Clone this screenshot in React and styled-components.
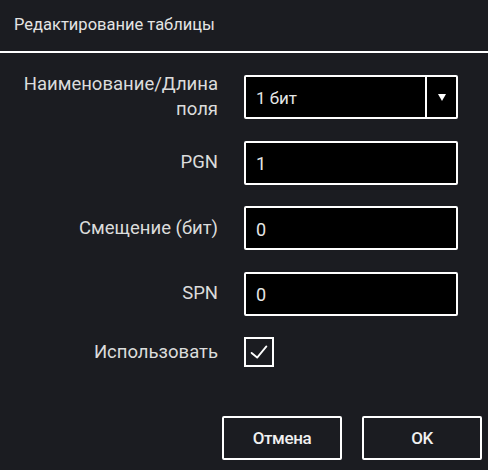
import React from 'react';
import styled, { createGlobalStyle } from 'styled-components';

const GlobalStyle = createGlobalStyle`
  html, body {
    margin: 0;
    padding: 0;
    background: #1b1c21;
  }
  body {
    font-family: Roboto, "Liberation Sans", sans-serif;
    color: #e6e6e6;
  }
`;

const Dialog = styled.div`
  width: 488px;
  height: 470px;
  background: #1b1c21;
  display: flex;
  flex-direction: column;
  box-sizing: border-box;
`;

const Header = styled.div`
  height: 53px;
  display: flex;
  align-items: center;
  padding-left: 14px;
  padding-bottom: 2px;
  box-sizing: border-box;
  border-bottom: 2px solid #ffffff;
  font-size: 16.5px;
  color: #e4e4e4;
`;

const Form = styled.div`
  display: grid;
  grid-template-columns: 1fr 214px;
  grid-template-rows: repeat(4, 44px) 30px;
  column-gap: 26px;
  row-gap: 21.5px;
  padding: 22px 30px 0 16px;
  align-items: center;
`;

const Label = styled.label`
  text-align: right;
  font-size: 18.5px;
  line-height: 25px;
  color: #dcdcdc;
`;

const Field = styled.div`
  height: 44px;
  box-sizing: border-box;
  border: 2px solid #ffffff;
  border-radius: 2px;
  background: #000000;
  display: flex;
  align-items: center;
  color: #e6e6e6;
`;

const Value = styled.span`
  flex: 1;
  padding-left: 10px;
  padding-top: 2px;
  font-size: ${(p) => (p.small ? '17px' : '18px')};
`;

const Arrow = styled.div`
  width: 29px;
  align-self: stretch;
  border-left: 2px solid #ffffff;
  display: flex;
  align-items: center;
  justify-content: center;

  &::after {
    content: '';
    border-left: 4px solid transparent;
    border-right: 4px solid transparent;
    border-top: 7px solid #ffffff;
    margin-top: 1px;
  }
`;

const Check = styled.div`
  width: 30px;
  height: 30px;
  box-sizing: border-box;
  border: 2px solid #ffffff;
  display: flex;
  align-items: center;
  justify-content: center;
`;

const Buttons = styled.div`
  display: flex;
  justify-content: flex-end;
  gap: 20px;
  padding-right: 6px;
  margin-top: 49px;
`;

const Button = styled.button`
  width: 120px;
  height: 44px;
  box-sizing: border-box;
  border: 2px solid #ffffff;
  border-radius: 2px;
  background: #1b1c21;
  color: #f0f0f0;
  font-family: Roboto, "Liberation Sans", sans-serif;
  font-size: 17px;
  font-weight: 500;
  letter-spacing: -0.4px;
  padding: 0;
  cursor: pointer;
`;

function TextField({ value }) {
  return (
    <Field>
      <Value>{value}</Value>
    </Field>
  );
}

export default function App() {
  return (
    <>
      <GlobalStyle />
      <Dialog>
        <Header>Редактирование таблицы</Header>
        <Form>
          <Label>Наименование/Длина поля</Label>
          <Field>
            <Value small>1 бит</Value>
            <Arrow />
          </Field>

          <Label>PGN</Label>
          <TextField value="1" />

          <Label>Смещение (бит)</Label>
          <TextField value="0" />

          <Label>SPN</Label>
          <TextField value="0" />

          <Label>Использовать</Label>
          <Check>
            <svg width="24" height="24" viewBox="0 0 26 26">
              <polyline
                points="5,14 11,19 21,7"
                fill="none"
                stroke="#ffffff"
                strokeWidth="2"
                strokeLinecap="round"
                strokeLinejoin="round"
              />
            </svg>
          </Check>
        </Form>
        <Buttons>
          <Button>Отмена</Button>
          <Button>OK</Button>
        </Buttons>
      </Dialog>
    </>
  );
}
